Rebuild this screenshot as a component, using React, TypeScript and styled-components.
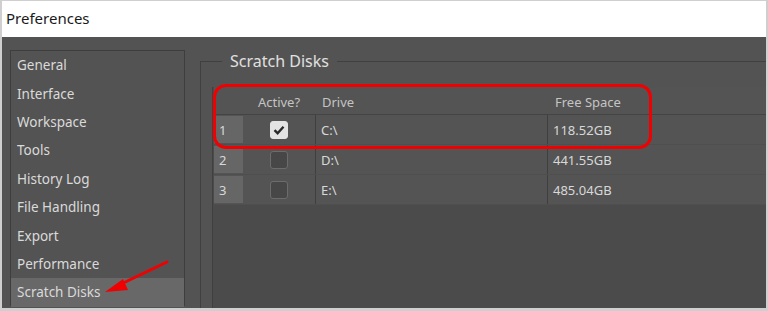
import React from "react";
import styled, { createGlobalStyle } from "styled-components";

const GlobalStyle = createGlobalStyle`
  html, body {
    margin: 0;
    padding: 0;
    background: #d2d2d2;
  }
  * {
    box-sizing: border-box;
  }
`;

const Window = styled.div`
  position: relative;
  width: 768px;
  height: 311px;
  border: 2px solid #cfcfcf;
  border-top-width: 1px;
  display: flex;
  flex-direction: column;
  overflow: hidden;
  font-family: "Noto Sans", "Open Sans", sans-serif;
`;

const TitleBar = styled.div`
  height: 36px;
  flex-shrink: 0;
  background: #ffffff;
  display: flex;
  align-items: center;
  padding: 0 0 3px 4px;
  font-size: 15px;
  color: #1a1a1a;
`;

const Body = styled.div`
  flex: 1;
  min-height: 0;
  background: #535353;
  display: flex;
  padding: 13px 0 2px 8px;
  border-bottom: 1px solid #cfcfcf;
`;

const Sidebar = styled.div`
  width: 175px;
  border: 1px solid #3e3e3e;
  display: flex;
  flex-direction: column;
`;

const NavItem = styled.div<{ $active?: boolean }>`
  height: 28.4px;
  flex-shrink: 0;
  display: flex;
  align-items: center;
  padding-left: 6px;
  font-size: 13.5px;
  color: #dadada;
  background: ${(p) => (p.$active ? "#686868" : "transparent")};
`;

const Content = styled.div`
  flex: 1;
  margin-left: 15px;
  margin-bottom: -2px;
  display: flex;
  flex-direction: column;
`;

const Group = styled.fieldset`
  flex: 1;
  margin: 0;
  padding: 0 0 0 11px;
  border: none;
  border-top: 1px solid #404040;
  border-left: 1px solid #404040;
  display: flex;
  flex-direction: column;
`;

const Legend = styled.legend`
  margin-left: 10px;
  padding: 0 8px;
  font-size: 16px;
  color: #e0e0e0;
`;

const TableArea = styled.div`
  position: relative;
  flex: 1;
  margin-top: 15px;
  background: #4b4b4b;
  border-left: 1px solid #404040;
  padding-left: 1px;
`;

const Row = styled.div<{ $header?: boolean }>`
  display: grid;
  grid-template-columns: 29px 72px 232px 1fr;
  height: ${(p) => (p.$header ? "28px" : "30px")};
  background: #545454;
  border-bottom: 1px solid ${(p) => (p.$header ? "#444444" : "#4f4f4f")};
  font-size: 13px;
  color: ${(p) => (p.$header ? "#c4c4c4" : "#d8d8d8")};
`;

const NumCell = styled.div`
  background: #666666;
  margin: 1px 0;
  padding-left: 5px;
  display: flex;
  align-items: center;
`;

const HeadCell = styled.div<{ $center?: boolean; $pad?: number }>`
  display: flex;
  align-items: center;
  justify-content: ${(p) => (p.$center ? "center" : "flex-start")};
  padding-left: ${(p) => p.$pad ?? 0}px;
  padding-top: 2px;
`;

const Cell = styled.div<{ $center?: boolean; $sep?: boolean }>`
  display: flex;
  align-items: center;
  justify-content: ${(p) => (p.$center ? "center" : "flex-start")};
  padding-left: ${(p) => (p.$center ? 0 : 5)}px;
  border-left: ${(p) => (p.$sep ? "1px solid #3f3f3f" : "none")};
`;

const Check = styled.div<{ $on?: boolean }>`
  width: 18px;
  height: 18px;
  border-radius: 3px;
  background: ${(p) => (p.$on ? "#e4e4e4" : "#474747")};
  border: 1px solid ${(p) => (p.$on ? "#e4e4e4" : "#6c6c6c")};
  display: flex;
  align-items: center;
  justify-content: center;
`;

const Highlight = styled.div`
  position: absolute;
  left: 0;
  top: -3px;
  width: 439px;
  height: 65px;
  border: 3px solid #f00000;
  border-radius: 13px;
  pointer-events: none;
`;

const Arrow = styled.svg`
  position: absolute;
  left: 95px;
  top: 253px;
  pointer-events: none;
`;

const navItems = [
  "General",
  "Interface",
  "Workspace",
  "Tools",
  "History Log",
  "File Handling",
  "Export",
  "Performance",
  "Scratch Disks",
];

const disks = [
  { n: 1, on: true, drive: "C:\\", free: "118.52GB" },
  { n: 2, on: false, drive: "D:\\", free: "441.55GB" },
  { n: 3, on: false, drive: "E:\\", free: "485.04GB" },
];

export default function App() {
  return (
    <>
      <GlobalStyle />
      <Window>
        <TitleBar>Preferences</TitleBar>
        <Body>
          <Sidebar>
            {navItems.map((item) => (
              <NavItem key={item} $active={item === "Scratch Disks"}>
                {item}
              </NavItem>
            ))}
          </Sidebar>
          <Content>
            <Group>
              <Legend>Scratch Disks</Legend>
              <TableArea>
                <Row $header>
                  <div />
                  <HeadCell $center>Active?</HeadCell>
                  <HeadCell $pad={7}>Drive</HeadCell>
                  <HeadCell $pad={8}>Free Space</HeadCell>
                </Row>
                {disks.map((d) => (
                  <Row key={d.n}>
                    <NumCell>{d.n}</NumCell>
                    <Cell $center>
                      <Check $on={d.on}>
                        {d.on && (
                          <svg width="12" height="10" viewBox="0 0 12 10">
                            <path
                              d="M1.5 5.2 L4.6 8.2 L10.5 1.8"
                              fill="none"
                              stroke="#2a2a2a"
                              strokeWidth="2.4"
                            />
                          </svg>
                        )}
                      </Check>
                    </Cell>
                    <Cell $sep>{d.drive}</Cell>
                    <Cell $sep>{d.free}</Cell>
                  </Row>
                ))}
                <Highlight />
              </TableArea>
            </Group>
          </Content>
        </Body>
        <Arrow width="80" height="45" viewBox="0 0 80 45">
          <line x1="70" y1="8" x2="20" y2="32" stroke="#f00000" strokeWidth="3" strokeLinecap="round" />
          <polygon points="8,38 26,25 31,36" fill="#f00000" />
        </Arrow>
      </Window>
    </>
  );
}
